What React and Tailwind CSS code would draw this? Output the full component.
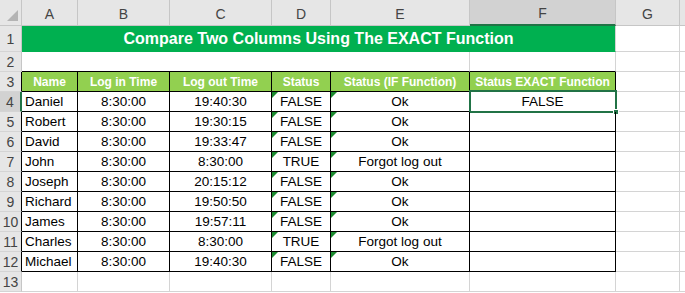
const columns = [
  { key: "A", width: "w-[56px]" },
  { key: "B", width: "w-[92px]" },
  { key: "C", width: "w-[102px]" },
  { key: "D", width: "w-[59px]" },
  { key: "E", width: "w-[139px]" },
  { key: "F", width: "w-[146px]" },
  { key: "G", width: "w-[64px]" },
];

const headers = [
  "Name",
  "Log in Time",
  "Log out Time",
  "Status",
  "Status (IF Function)",
  "Status EXACT Function",
];

const rows = [
  ["Daniel", "8:30:00", "19:40:30", "FALSE", "Ok", "FALSE"],
  ["Robert", "8:30:00", "19:30:15", "FALSE", "Ok", ""],
  ["David", "8:30:00", "19:33:47", "FALSE", "Ok", ""],
  ["John", "8:30:00", "8:30:00", "TRUE", "Forgot log out", ""],
  ["Joseph", "8:30:00", "20:15:12", "FALSE", "Ok", ""],
  ["Richard", "8:30:00", "19:50:50", "FALSE", "Ok", ""],
  ["James", "8:30:00", "19:57:11", "FALSE", "Ok", ""],
  ["Charles", "8:30:00", "8:30:00", "TRUE", "Forgot log out", ""],
  ["Michael", "8:30:00", "19:40:30", "FALSE", "Ok", ""],
];

function RowHeader({ label, selected = false, black = false }) {
  return (
    <div
      className={`flex h-full w-[22px] shrink-0 items-center justify-center border-b border-b-[#d4d4d4] pt-px text-[14px] text-[#444] ${
        selected
          ? "border-r-2 border-r-[#217346] bg-[#d2d2d2]"
          : black
          ? "border-r border-r-black bg-[#e6e6e6]"
          : "border-r border-r-[#c6c6c6] bg-[#e6e6e6]"
      }`}
    >
      {label}
    </div>
  );
}

function ErrorMark() {
  return (
    <div className="absolute left-0 top-0 h-0 w-0 border-r-[6px] border-t-[6px] border-r-transparent border-t-[#1a8a2e]" />
  );
}

function App() {
  return (
    <div
      className="h-[293px] w-[685px] overflow-hidden bg-white text-black"
      style={{ fontFamily: '"Liberation Sans", Arial, sans-serif' }}
    >
      {/* column letters */}
      <div className="flex h-[26px]">
        <div className="relative w-[22px] shrink-0 border-b border-r border-[#c6c6c6] bg-[#e6e6e6]">
          <div className="absolute bottom-[4px] right-[3px] h-0 w-0 border-b-[11px] border-l-[11px] border-b-[#b4b4b4] border-l-transparent" />
        </div>
        {columns.map((col) => (
          <div
            key={col.key}
            className={`${col.width} flex shrink-0 items-center justify-center border-r border-r-[#c6c6c6] pt-[3px] text-[14px] text-[#444] ${
              col.key === "F"
                ? "border-b-2 border-b-[#217346] bg-[#d2d2d2]"
                : "border-b border-b-[#c6c6c6] bg-[#e6e6e6]"
            }`}
          >
            {col.key}
          </div>
        ))}
        <div className="flex-1 border-b border-[#c6c6c6] bg-[#e6e6e6]" />
      </div>

      {/* row 1 title */}
      <div className="flex h-[26px]">
        <RowHeader label="1" />
        <div className="flex w-[594px] shrink-0 items-center justify-center border-b border-r border-b-[#00b050] border-r-[#d4d4d4] bg-[#00b050] pt-px text-[16px] font-bold text-white">
          Compare Two Columns Using The EXACT Function
        </div>
        <div className="w-[64px] shrink-0 border-b border-r border-[#d4d4d4]" />
        <div className="flex-1 border-b border-[#d4d4d4]" />
      </div>

      {/* row 2 */}
      <div className="flex h-[20px]">
        <RowHeader label="2" />
        <div className="w-[448px] shrink-0 border-b border-r border-b-black border-r-[#d4d4d4]" />
        <div className="w-[146px] shrink-0 border-b border-r border-b-black border-r-[#d4d4d4]" />
        <div className="w-[64px] shrink-0 border-b border-r border-[#d4d4d4]" />
        <div className="flex-1 border-b border-[#d4d4d4]" />
      </div>

      {/* row 3 headers */}
      <div className="flex h-[20px]">
        <RowHeader label="3" black />
        {headers.map((h, i) => (
          <div
            key={h}
            className={`${columns[i].width} flex shrink-0 items-center justify-center whitespace-nowrap border-b border-r border-black bg-[#92d050] pt-px text-[12px] font-bold text-white`}
          >
            {h}
          </div>
        ))}
        <div className="w-[64px] shrink-0 border-b border-r border-[#d4d4d4]" />
        <div className="flex-1 border-b border-[#d4d4d4]" />
      </div>

      {/* data rows */}
      {rows.map((row, r) => (
        <div key={row[0]} className="flex h-[20px]">
          <RowHeader label={r + 4} selected={r === 0} black />
          {row.map((value, i) => (
            <div
              key={i}
              className={`${columns[i].width} relative flex shrink-0 items-center whitespace-nowrap border-b border-r border-black pt-[2px] text-[13.5px] ${
                i === 0 ? "justify-start pl-[3px]" : "justify-center"
              }`}
            >
              {(i === 3 || i === 4) && <ErrorMark />}
              {value}
              {i === 5 && r === 0 && (
                <div className="absolute -left-[1px] -top-[2px] h-[23px] w-[148px] border-2 border-[#217346]">
                  <div className="absolute -bottom-[4px] -right-[4px] h-[6px] w-[6px] border border-white bg-[#217346]" />
                </div>
              )}
            </div>
          ))}
          <div className="w-[64px] shrink-0 border-b border-r border-[#d4d4d4]" />
          <div className="flex-1 border-b border-[#d4d4d4]" />
        </div>
      ))}

      {/* row 13 */}
      <div className="flex h-[20px]">
        <RowHeader label="13" />
        {columns.map((col) => (
          <div
            key={col.key}
            className={`${col.width} shrink-0 border-b border-r border-[#d4d4d4]`}
          />
        ))}
        <div className="flex-1 border-b border-[#d4d4d4]" />
      </div>
    </div>
  );
}

export default App;
